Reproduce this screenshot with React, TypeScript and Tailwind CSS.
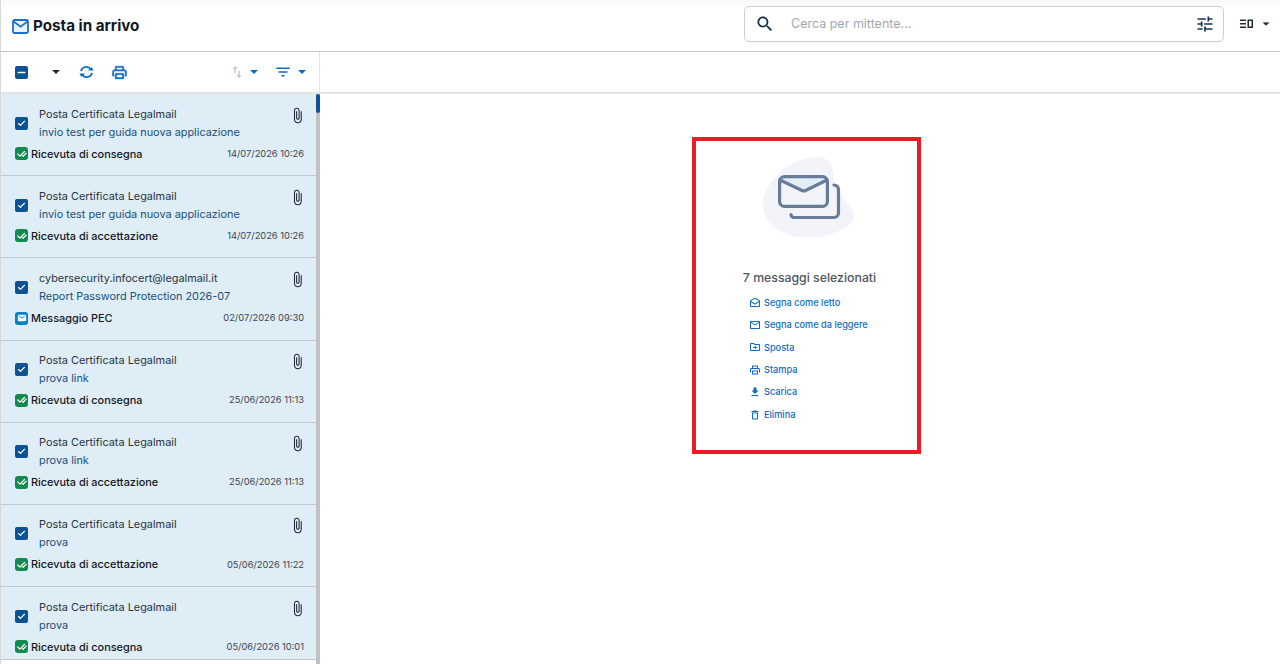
import { Check, CheckCheck, Minus } from "lucide-react";

const paths = {
  mail: "M20 4H4c-1.1 0-1.99.9-1.99 2L2 18c0 1.1.9 2 2 2h16c1.1 0 2-.9 2-2V6c0-1.1-.9-2-2-2zm0 14H4V8l8 5 8-5v10zm-8-7L4 6h16l-8 5z",
  mailFilled: "M20 4H4c-1.1 0-1.99.9-1.99 2L2 18c0 1.1.9 2 2 2h16c1.1 0 2-.9 2-2V6c0-1.1-.9-2-2-2zm0 4l-8 5-8-5V6l8 5 8-5v2z",
  mailOpen: "M21.99 8c0-.72-.37-1.35-.94-1.7L12 1 2.95 6.3C2.38 6.65 2 7.28 2 8v10c0 1.1.9 2 2 2h16c1.1 0 2-.9 2-2l-.01-10zM12 3.32 19.99 8v.01L12 13 4 8l8-4.68zM4 18v-7.66l8 5.02 7.99-4.99L20 18H4z",
  move: "M20 6h-8l-2-2H4c-1.1 0-2 .9-2 2v12c0 1.1.9 2 2 2h16c1.1 0 2-.9 2-2V8c0-1.1-.9-2-2-2zm0 12H4V6h5.17l2 2H20v10zm-8-4H8v-2h4V9l4 4-4 4v-3z",
  print: "M19 8h-1V3H6v5H5c-1.66 0-3 1.34-3 3v6h4v4h12v-4h4v-6c0-1.66-1.34-3-3-3zM8 5h8v3H8V5zm8 14H8v-4h8v4zm2-2v-4H6v4H4v-6c0-.55.45-1 1-1h14c.55 0 1 .45 1 1v6h-2z",
  download: "M19 9h-4V3H9v6H5l7 7 7-7zM5 18v2h14v-2H5z",
  trash: "M16 9v10H8V9h8m-1.5-6h-5l-1 1H5v2h14V4h-3.5l-1-1zM18 7H6v12c0 1.1.9 2 2 2h8c1.1 0 2-.9 2-2V7z",
  search: "M15.5 14h-.79l-.28-.27C15.41 12.59 16 11.11 16 9.5 16 5.91 13.09 3 9.5 3S3 5.91 3 9.5 5.91 16 9.5 16c1.61 0 3.09-.59 4.23-1.57l.27.28v.79l5 4.99L20.49 19l-4.99-5zm-6 0C7.01 14 5 11.99 5 9.5S7.01 5 9.5 5 14 7.01 14 9.5 11.99 14 9.5 14z",
  tune: "M3 17v2h6v-2H3zM3 5v2h10V5H3zm10 16v-2h8v-2h-8v-2h-2v6h2zM7 9v2H3v2h4v2h2V9H7zm14 4v-2H11v2h10zm-6-4h2V7h4V5h-4V3h-2v6z",
  sort: "M16 17.01V10h-2v7.01h-3L15 21l4-3.99h-3zM9 3L5 6.99h3V14h2V6.99h3L9 3z",
  filter: "M10 18h4v-2h-4v2zM3 6v2h18V6H3zm3 7h12v-2H6v2z",
  clip: "M16.5 6v11.5c0 2.21-1.79 4-4 4s-4-1.79-4-4V5c0-1.38 1.12-2.5 2.5-2.5s2.5 1.12 2.5 2.5v10.5c0 .55-.45 1-1 1s-1-.45-1-1V6H10v9.5c0 1.38 1.12 2.5 2.5 2.5s2.5-1.12 2.5-2.5V5c0-2.21-1.79-4-4-4S7 2.79 7 5v12.5c0 3.04 2.46 5.5 5.5 5.5s5.5-2.46 5.5-5.5V6h-1.5z",
};

const Icon = ({ d, size, className }: { d: string; size: number; className?: string }) => (
  <svg width={size} height={size} viewBox="0 0 24 24" fill="currentColor" className={`shrink-0 ${className ?? ""}`}>
    <path d={d} />
  </svg>
);

const messages = [
  { sender: "Posta Certificata Legalmail", subject: "invio test per guida nuova applicazione", kind: "Ricevuta di consegna", date: "14/07/2026 10:26" },
  { sender: "Posta Certificata Legalmail", subject: "invio test per guida nuova applicazione", kind: "Ricevuta di accettazione", date: "14/07/2026 10:26" },
  { sender: "cybersecurity.infocert@legalmail.it", subject: "Report Password Protection 2026-07", kind: "Messaggio PEC", date: "02/07/2026 09:30" },
  { sender: "Posta Certificata Legalmail", subject: "prova link", kind: "Ricevuta di consegna", date: "25/06/2026 11:13" },
  { sender: "Posta Certificata Legalmail", subject: "prova link", kind: "Ricevuta di accettazione", date: "25/06/2026 11:13" },
  { sender: "Posta Certificata Legalmail", subject: "prova", kind: "Ricevuta di accettazione", date: "05/06/2026 11:22" },
  { sender: "Posta Certificata Legalmail", subject: "prova", kind: "Ricevuta di consegna", date: "05/06/2026 10:01" },
];

const actions = [
  { label: "Segna come letto", d: paths.mailOpen },
  { label: "Segna come da leggere", d: paths.mail },
  { label: "Sposta", d: paths.move },
  { label: "Stampa", d: paths.print },
  { label: "Scarica", d: paths.download },
  { label: "Elimina", d: paths.trash },
];

const Caret = ({ className }: { className: string }) => (
  <svg width="8" height="4" viewBox="0 0 8 4" className={`shrink-0 ${className}`}>
    <path d="M0 0h8L4 4z" fill="currentColor" />
  </svg>
);

const MessageRow = ({ data }: { data: (typeof messages)[number] }) => (
  <div className="h-[82.2px] shrink-0 border-b border-[#c4c8cc] bg-[#deedf6] pl-[14px] pr-3 flex flex-col">
    <div className="flex pt-[10.5px]">
      <div className="w-[13px] h-[13px] mt-[12px] rounded-[2px] bg-[#0b5394] flex items-center justify-center text-white">
        <Check size={9} strokeWidth={3} />
      </div>
      <div className="ml-[11px] flex-1 min-w-0">
        <div className="text-[10.9px] leading-[18px] text-[#2b3440]">{data.sender}</div>
        <div className="text-[10.9px] leading-[18px] text-[#20507f]">{data.subject}</div>
      </div>
      <Icon d={paths.clip} size={17} className="text-[#1f2a37] mt-[2px] -mr-[2px]" />
    </div>
    <div className="flex items-center mt-[5px]">
      {data.kind === "Messaggio PEC" ? (
        <div className="w-[13px] h-[13px] rounded-[3px] bg-[#0a7fc9] flex items-center justify-center text-white">
          <Icon d={paths.mailFilled} size={10} />
        </div>
      ) : (
        <div className="w-[13px] h-[13px] rounded-[3px] bg-[#118a4e] flex items-center justify-center text-white">
          <CheckCheck size={10} strokeWidth={3} />
        </div>
      )}
      <span className="ml-[3px] text-[10.9px] font-medium text-[#12181f]">{data.kind}</span>
      <span className="ml-auto text-[9.3px] text-[#3c4652]">{data.date}</span>
    </div>
  </div>
);

export default function App() {
  return (
    <div className="h-[664px] w-[1280px] overflow-hidden flex flex-col bg-white border-l border-[#d8d8d8] font-['Inter','Liberation_Sans',sans-serif]">
      <header className="h-[52px] shrink-0 border-b border-[#c4c4c4] bg-gradient-to-b from-[#f7f8f8] to-white to-[8px] flex items-center pl-[11px] pr-[10px]">
        <svg width="17" height="15" viewBox="0 0 17 15" className="shrink-0 mt-[1px] text-[#1a6fd0]">
          <rect x="1" y="1" width="15" height="13" rx="1.5" fill="#eaf3fb" stroke="currentColor" strokeWidth="1.8" />
          <path d="M1.5 2.5l7 5.2 7-5.2" fill="none" stroke="currentColor" strokeWidth="1.6" />
        </svg>
        <h1 className="ml-[4px] mt-[1px] text-[15.2px] font-bold text-[#111a24]">Posta in arrivo</h1>
        <div className="ml-auto -mt-[3px] h-[36px] w-[480px] rounded-[5px] border border-[#cfcfcf] flex items-center pl-[10px] pr-[8px]">
          <Icon d={paths.search} size={20} className="text-[#0d2b4e]" />
          <span className="ml-[16px] text-[12.5px] text-[#a3a8b0]">Cerca per mittente...</span>
          <Icon d={paths.tune} size={20} className="ml-auto text-[#16304f]" />
        </div>
        <div className="ml-[16px] -mt-[3px] flex items-center text-[#1f2a37]">
          <svg width="13" height="10" viewBox="0 0 13 10">
            <path d="M0 .5h6v1.5H0zM0 4h6v1.5H0zM0 7.5h6V9H0zM7.5 .5h5.5V9H7.5zM9 2v5.5h2.5V2z" fill="currentColor" fillRule="evenodd" />
          </svg>
          <Caret className="ml-[9px] scale-90" />
        </div>
      </header>

      <div className="flex flex-1 min-h-0">
        <aside className="w-[319px] shrink-0 flex flex-col">
          <div className="h-[42px] shrink-0 border-b-2 border-r border-[#e4e4e4] flex items-center pl-[14px] pr-[13px]">
            <div className="w-[13px] h-[13px] rounded-[2px] bg-[#0b5394] flex items-center justify-center text-white">
              <Minus size={11} strokeWidth={3.5} />
            </div>
            <Caret className="ml-[24px] text-[#1f2a37]" />
            <svg width="15" height="14" viewBox="0 0 15 14" className="shrink-0 ml-[19px] text-[#0d6cc2]">
              <path d="M2 6.2A5.4 5.4 0 0 1 11.6 4" fill="none" stroke="currentColor" strokeWidth="1.7" />
              <path d="M13 7.8A5.4 5.4 0 0 1 3.4 10" fill="none" stroke="currentColor" strokeWidth="1.7" />
              <path d="M9 5.6h5.6L12.6 2zM6 8.4H.4L2.4 12z" fill="currentColor" />
            </svg>
            <Icon d={paths.print} size={17} className="ml-[17px] text-[#0d6cc2] stroke-current stroke-[0.6]" />
            <Icon d={paths.sort} size={16} className="ml-auto text-[#b9c6d2]" />
            <Caret className="ml-[5px] text-[#0d6cc2]" />
            <Icon d={paths.filter} size={18} className="ml-[16px] text-[#0d6cc2]" />
            <Caret className="ml-[6px] text-[#0d6cc2]" />
          </div>
          <div className="flex-1 min-h-0 flex">
            <div className="flex-1 min-w-0">
              <div className="h-[566px] border-b border-[#c4c8cc] flex flex-col overflow-hidden">
                {messages.map((m, i) => (
                  <MessageRow key={i} data={m} />
                ))}
              </div>
            </div>
            <div className="w-[4px] shrink-0 bg-[#c2c2c2]">
              <div className="h-[19px] bg-[#0b5394] rounded-full" />
            </div>
          </div>
        </aside>

        <main className="flex-1 min-w-0 flex flex-col">
          <div className="h-[42px] shrink-0 border-b-2 border-[#e4e4e4]" />
          <div className="pt-[43px] pl-[372px]">
            <div className="w-[229px] h-[317px] border-[4px] border-[#ed1c24] flex flex-col items-center pt-[16px]">
              <svg width="92" height="81" viewBox="0 0 92 81" className="ml-[4px]">
                <path d="M56 0C66 0 70 10 71 20C72 34 80 42 88 50C94 58 92 66 80 72C68 78 56 81 45 81C25 81 0 70 0 48C0 32 10 24 16 16C24 6 40 0 56 0z" fill="#f2f4f9" />
                <path d="M21 19.5h40a3 3 0 0 1 3 2L41 33 18 21.5z" fill="#e2edf7" />
                <path d="M17 23l22 10.5a4 4 0 0 0 3.5 0L64 23" fill="none" stroke="#667c99" strokeWidth="3.2" strokeLinecap="round" />
                <rect x="16.6" y="19.6" width="47.8" height="29.8" rx="5" fill="none" stroke="#667c99" strokeWidth="3.2" />
                <path d="M71 28a4.5 4.5 0 0 1 4.5 4.5v23.5a4.5 4.5 0 0 1-4.5 4.5H31a3 3 0 0 1-3-3" fill="none" stroke="#667c99" strokeWidth="3.2" strokeLinecap="round" />
              </svg>
              <div className="mt-[31px] ml-[6px] text-[12.3px] font-medium text-[#4f5661]">7 messaggi selezionati</div>
              <div className="mt-[4px] self-start ml-[54px] flex flex-col">
                {actions.map((a) => (
                  <div key={a.label} className="h-[22.4px] flex items-center text-[#0d6cc2]">
                    <Icon d={a.d} size={12} className="-ml-[1px]" />
                    <span className="ml-[3px] text-[9.2px] font-medium">{a.label}</span>
                  </div>
                ))}
              </div>
            </div>
          </div>
        </main>
      </div>
    </div>
  );
}
